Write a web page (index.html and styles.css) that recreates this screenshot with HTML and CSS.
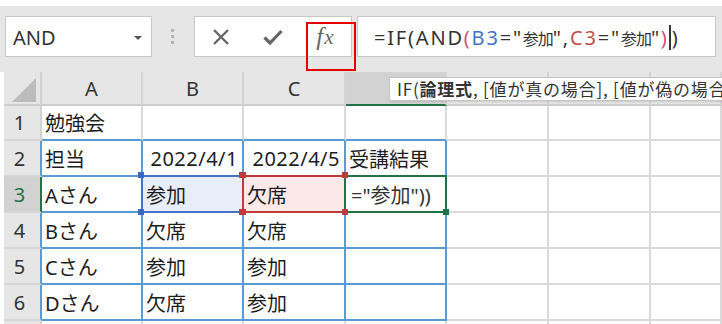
FILE: index.html
```html
<!DOCTYPE html>
<html lang="ja">
<head>
<meta charset="utf-8">
<title>Excel</title>
<link rel="stylesheet" href="styles.css">
</head>
<body>
<div class="topgap"></div>
<div class="toolbar">
  <div class="namebox"><span class="nm">AND</span><span class="arrow"></span></div>
  <div class="grip"><i></i><i></i><i></i></div>
  <div class="fbtns">
    <div class="btn"><svg width="18" height="16" viewBox="0 0 18 16"><path d="M2 1 L16 15 M16 1 L2 15" stroke="#666" stroke-width="2.4" fill="none"/></svg></div>
    <div class="btn"><svg width="20" height="16" viewBox="0 0 20 16"><path d="M1.5 8.5 L7 14 L18.5 2" stroke="#666" stroke-width="3.2" fill="none"/></svg></div>
    <div class="btn fxbtn"><span class="fx">f</span><span class="fx x">x</span></div>
    <div class="redbox"></div>
  </div>
  <div class="formula"><span class="ftext">=IF(AND<span class="p1">(</span><span class="rb">B3</span>="<span class="cj">参加</span>",<span class="rc">C3</span>="<span class="cj">参加</span>"<span class="p1">)</span><span class="caret"></span>)</span></div>
</div>
<div class="sheet">
  <div class="tooltip">IF(<b>論理式</b>, [値が真の場合], [値が偽の場合]</div>

  <div class="corner"><div class="tri"></div></div>
  <div class="ch">A</div>
  <div class="ch">B</div>
  <div class="ch">C</div>
  <div class="ch sel"></div>
  <div class="ch"></div>
  <div class="ch"></div>
  <div class="ch"></div>

  <div class="rh">1</div>
  <div class="c bb">勉強会</div>
  <div class="c bb"></div>
  <div class="c bb"></div>
  <div class="c bb"></div>
  <div class="c"></div>
  <div class="c"></div>
  <div class="c"></div>

  <div class="rh blue">2</div>
  <div class="c bb br">担当</div>
  <div class="c bb br right">2022/4/1</div>
  <div class="c bb br right">2022/4/5</div>
  <div class="c bb br">受講結果</div>
  <div class="c"></div>
  <div class="c"></div>
  <div class="c"></div>

  <div class="rh sel">3</div>
  <div class="c bb br">Aさん</div>
  <div class="c bb br refb">参加<span class="sq tl"></span><span class="sq tr"></span><span class="sq bl"></span><span class="sq br2"></span></div>
  <div class="c bb br refc">欠席<span class="sq tl"></span><span class="sq tr"></span><span class="sq bl"></span><span class="sq br2"></span></div>
  <div class="c bb br active"><span class="edit">="参加"))</span><span class="handle"></span></div>
  <div class="c"></div>
  <div class="c"></div>
  <div class="c"></div>

  <div class="rh blue">4</div>
  <div class="c bb br">Bさん</div>
  <div class="c bb br">欠席</div>
  <div class="c bb br">欠席</div>
  <div class="c bb br"></div>
  <div class="c"></div>
  <div class="c"></div>
  <div class="c"></div>

  <div class="rh blue">5</div>
  <div class="c bb br">Cさん</div>
  <div class="c bb br">参加</div>
  <div class="c bb br">参加</div>
  <div class="c bb br"></div>
  <div class="c"></div>
  <div class="c"></div>
  <div class="c"></div>

  <div class="rh blue">6</div>
  <div class="c bb br">Dさん</div>
  <div class="c bb br">欠席</div>
  <div class="c bb br">参加</div>
  <div class="c bb br"></div>
  <div class="c"></div>
  <div class="c"></div>
  <div class="c"></div>

  <div class="rh"></div>
  <div class="c"></div>
  <div class="c"></div>
  <div class="c"></div>
  <div class="c"></div>
  <div class="c"></div>
  <div class="c"></div>
  <div class="c"></div>
</div>
</body>
</html>
```

FILE: styles.css
```css
* { box-sizing: border-box; }
html, body { margin: 0; padding: 0; }
body {
  width: 722px;
  height: 324px;
  overflow: hidden;
  background: #fff;
  font-family: "Noto Sans", "Noto Sans CJK JP", sans-serif;
  color: #222;
}
.topgap { height: 6px; }
.toolbar {
  height: 66px;
  background: #e6e6e6;
  display: flex;
  align-items: flex-start;
  padding-top: 10px;
}
.namebox {
  margin-left: 5px;
  width: 147px;
  height: 41px;
  border: 1px solid #c8c8c8;
  background: #fff;
  display: flex;
  align-items: center;
  padding-left: 7px;
  padding-right: 9px;
  padding-top: 2px;
  font-size: 20px;
  color: #333;
}
.namebox .nm { flex: 1; }
.namebox .arrow {
  width: 0; height: 0;
  border-left: 4px solid transparent;
  border-right: 4px solid transparent;
  border-top: 4px solid #555;
}
.grip {
  margin-left: 19px;
  padding-top: 13px;
  display: flex;
  flex-direction: column;
  gap: 3px;
}
.grip i { display: block; width: 3px; height: 3px; background: #b4b4b4; }
.fbtns {
  position: relative;
  margin-left: 20px;
  width: 158px;
  height: 41px;
  border: 1px solid #c8c8c8;
  background: #fff;
  display: flex;
}
.btn {
  width: 52px;
  height: 39px;
  display: flex;
  align-items: center;
  justify-content: center;
}
.fxbtn { padding-top: 1px; }
.fx {
  font-family: "Liberation Serif", serif;
  font-style: italic;
  font-size: 25px;
  color: #666;
}
.fx.x { font-size: 21px; margin-left: 1px; }
.redbox {
  position: absolute;
  left: 111px;
  top: 5px;
  width: 50px;
  height: 49px;
  border: 2px solid #e60000;
}
.formula {
  margin-left: 5px;
  width: 359px;
  height: 41px;
  border: 1px solid #c8c8c8;
  background: #fff;
  display: flex;
  align-items: center;
  padding-left: 16px;
  padding-top: 2px;
  font-size: 20px;
  color: #333;
  white-space: nowrap;
}
.ftext { letter-spacing: 1.8px; }
.cj { font-size: 16px; letter-spacing: -1px; }
.p1 { color: #d24f7e; }
.rb { color: #4472c4; }
.rc { color: #c0504d; }
.caret {
  display: inline-block;
  width: 2px;
  height: 25px;
  background: #333;
  vertical-align: -5px;
  margin: 0 1px 0 0;
}

.sheet {
  position: relative;
  margin-left: 4px;
  display: grid;
  grid-template-columns: 38px 101px 101px 102px 101px 102px 102px 1fr;
  grid-template-rows: 34px 35px 36px 36px 36px 36px 36px 30px;
}
.tooltip {
  position: absolute;
  left: 385px;
  top: 5px;
  width: 360px;
  height: 24px;
  background: #fff;
  border: 1px solid #c4c4c4;
  box-shadow: 1px 1px 2px rgba(0,0,0,0.12);
  z-index: 5;
  font-family: "Noto Sans CJK JP", sans-serif;
  font-size: 17px;
  letter-spacing: 0.8px;
  line-height: 22px;
  padding-left: 7px;
  color: #333;
  white-space: nowrap;
  overflow: hidden;
}
.tooltip b { font-weight: 700; }
.corner {
  background: #e6e6e6;
  border-right: 2px solid #d2d2d2;
  border-bottom: 2px solid #cdcdcd;
  display: flex;
  justify-content: flex-end;
  align-items: flex-end;
  padding: 0 4px 2px 0;
}
.tri {
  width: 24px;
  height: 24px;
  background: #bcbcbc;
  clip-path: polygon(100% 0, 100% 100%, 0 100%);
}
.ch {
  background: #e6e6e6;
  border-right: 2px solid #d4d4d4;
  border-bottom: 2px solid #cdcdcd;
  display: flex;
  align-items: center;
  justify-content: center;
  font-size: 20px;
  color: #333;
}
.ch.sel { background: #d2d2d2; border-bottom-color: #217346; }
.rh {
  background: #e6e6e6;
  border-right: 2px solid #d2d2d2;
  border-bottom: 2px solid #d6d6d6;
  display: flex;
  align-items: center;
  justify-content: center;
  padding-right: 5px;
  font-size: 20px;
  color: #333;
}
.rh.blue { border-right-color: #5b9bd5; }
.rh.sel { background: #d2d2d2; border-right-color: #217346; color: #217346; }
.c {
  position: relative;
  background: #fff;
  border-right: 2px solid #dadada;
  border-bottom: 2px solid #dadada;
  display: flex;
  align-items: center;
  padding: 0 4px 0 3px;
  font-size: 20px;
  color: #1e1e1e;
  white-space: nowrap;
}
.c.right { justify-content: flex-end; letter-spacing: 0.5px; }
.c.bb { border-bottom-color: #5b9bd5; }
.c.br { border-right-color: #5b9bd5; }
.refb { background: #e8eef8; }
.refc { background: #fbe9e9; }
.refb::after, .refc::after, .active::after {
  content: "";
  position: absolute;
  top: -2px; left: -2px; right: -2px; bottom: -2px;
  border: 2px solid #4472c4;
}
.refc::after { border-color: #c0393b; }
.active::after { border-color: #217346; z-index: 1; }
.sq {
  position: absolute;
  width: 6px;
  height: 6px;
  background: #3a67c0;
  z-index: 2;
}
.refc .sq { background: #c0393b; }
.sq.tl { left: -5px; top: -5px; }
.sq.tr { right: -4px; top: -5px; }
.sq.bl { left: -5px; bottom: -4px; }
.sq.br2 { right: -4px; bottom: -4px; }
.edit { color: #333; padding-left: 2px; }
.handle {
  position: absolute;
  right: -4px;
  bottom: -4px;
  width: 6px;
  height: 6px;
  background: #217346;
  z-index: 3;
}
```
